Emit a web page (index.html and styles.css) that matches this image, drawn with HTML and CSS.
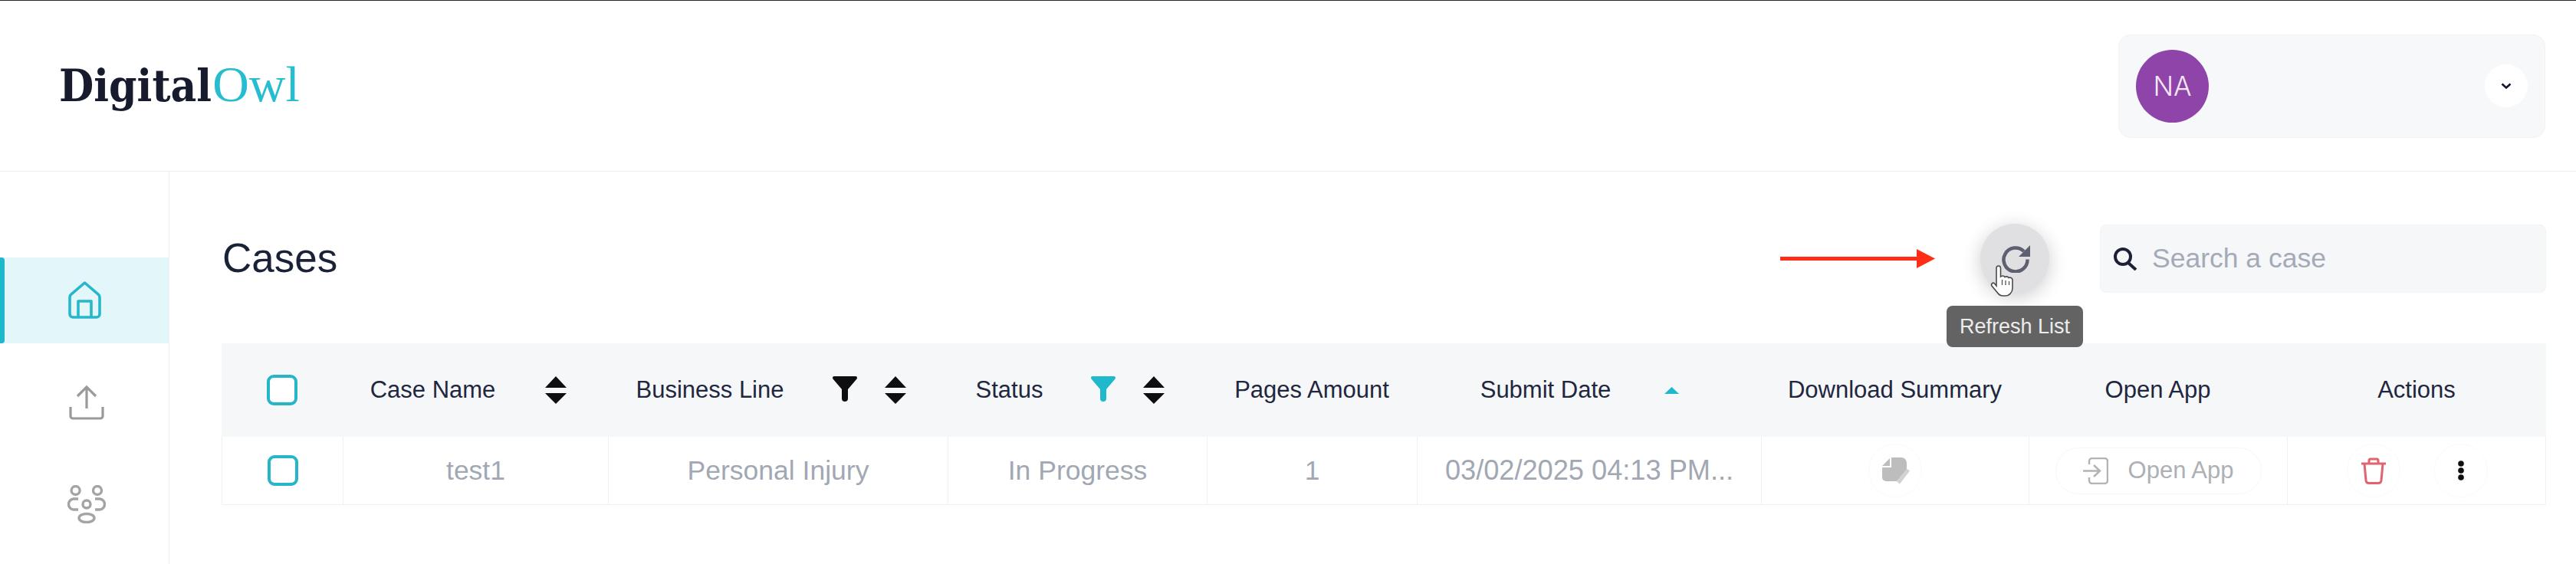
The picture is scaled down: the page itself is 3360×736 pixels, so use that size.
FILE: index.html
```html
<!DOCTYPE html>
<html lang="en">
<head>
<meta charset="utf-8">
<title>Cases</title>
<link rel="stylesheet" href="styles.css">
</head>
<body>
<div class="app">
  <header class="topbar">
    <div class="logo"><span class="logo-dark">Digital</span><span class="logo-light">Owl</span></div>
    <div class="user-card">
      <div class="avatar">NA</div>
      <div class="chevron-btn">
        <svg class="ic-chevron" viewBox="0 0 14 8"><path d="M1.5 1.5 7 6.5l5.5-5"/></svg>
      </div>
    </div>
  </header>
  <div class="main">
    <nav class="sidebar">
      <a class="nav-item nav-active">
        <svg class="ic-home" viewBox="0 0 45 50"><path d="M3 43V21c0-1.5.6-2.800 1.800-3.800L22.500 2l17.700 15.200c1.200 1 1.800 2.300 1.800 3.800v22a4 4 0 0 1-4 4H7a4 4 0 0 1-4-4z"/><path d="M14 47V26h17v21"/></svg>
      </a>
      <a class="nav-item">
        <svg class="ic-upload" viewBox="0 0 46 46"><path d="M23 31V3M11 15 23 3l12 12"/><path d="M2 29v12a3 3 0 0 0 3 3h36a3 3 0 0 0 3-3V29"/></svg>
      </a>
      <a class="nav-item">
        <svg class="ic-group" viewBox="0 0 50 50"><circle cx="10.600" cy="7" r="5.500"/><circle cx="39" cy="7" r="5.500"/><circle cx="25" cy="25" r="5"/><ellipse cx="25" cy="43" rx="10" ry="5.500"/><path d="M14 18H8a6.500 7 0 0 0 0 14h6"/><path d="M36 18h6a6.500 7 0 0 1 0 14h-6"/></svg>
      </a>
    </nav>
    <section class="content">
      <div class="toolbar">
        <h1 class="title">Cases</h1>
        <svg class="ic-arrow" viewBox="0 0 202 25"><path d="M0 10h178V0l24 12.500L178 25V15H0z"/></svg>
        <div class="refresh">
          <svg class="ic-refresh" viewBox="0 0 38 37"><path class="arc" d="M29 9A15.500 15.500 0 1 0 33.500 19.500"/><path class="head" d="M37 1v15H22z"/></svg>
          <svg class="ic-hand" viewBox="0 0 32 42"><path d="M8 4c0-4 5.500-4 5.500 0v11c2.500-1.500 4.500-1 5.500.5 2-1 4-.5 5 1 2-1 4.500 0 5 2.500v11c0 5.500-4 10-9.500 10h-3c-3.500 0-5.500-1.500-7.500-4.500L2 27c-1.500-2.500 1.500-5 3.500-3L8 27z"/><path d="M15.500 19v7M20 20v6M24.500 21v5"/></svg>
          <div class="tooltip">Refresh List</div>
        </div>
        <label class="search">
          <svg class="ic-search" viewBox="0 0 32 30"><circle cx="13" cy="12" r="10"/><path d="m20 20 10 9"/></svg>
          <span class="search-text">Search a case</span>
        </label>
      </div>
      <div class="table">
        <div class="row head-row">
          <div class="cell"><span class="check"></span></div>
          <div class="cell"><span>Case Name</span><svg class="ic-sort gap-wide" viewBox="0 0 28 36"><path d="M14 0l14 15H0zM0 22h28L14 36z"/></svg></div>
          <div class="cell"><span>Business Line</span><svg class="ic-filter" viewBox="0 0 32 33"><path d="M2 0h28c2 0 2.500 2 1.500 3.500L20 17v12a4 4 0 0 1-8 0V17L.5 3.500C-.5 2 0 0 2 0z"/></svg><svg class="ic-sort gap-narrow" viewBox="0 0 28 36"><path d="M14 0l14 15H0zM0 22h28L14 36z"/></svg></div>
          <div class="cell"><span>Status</span><svg class="ic-filter filter-on" viewBox="0 0 32 33"><path d="M2 0h28c2 0 2.500 2 1.500 3.500L20 17v12a4 4 0 0 1-8 0V17L.5 3.500C-.5 2 0 0 2 0z"/></svg><svg class="ic-sort gap-narrow" viewBox="0 0 28 36"><path d="M14 0l14 15H0zM0 22h28L14 36z"/></svg></div>
          <div class="cell"><span>Pages Amount</span></div>
          <div class="cell"><span>Submit Date</span><span class="sort-slot"><svg class="ic-asc" viewBox="0 0 19 9"><path d="M9.500 0 19 9H0z"/></svg></span></div>
          <div class="cell"><span>Download Summary</span></div>
          <div class="cell"><span>Open App</span></div>
          <div class="cell"><span>Actions</span></div>
        </div>
        <div class="row body-row">
          <div class="cell"><span class="check"></span></div>
          <div class="cell">test1</div>
          <div class="cell">Personal Injury</div>
          <div class="cell">In Progress</div>
          <div class="cell">1</div>
          <div class="cell"><span class="clip">03/02/2025 04:13 PM...</span></div>
          <div class="cell">
            <span class="round-btn">
              <svg class="ic-doc" viewBox="0 0 37 36"><path class="doc" d="M12 1h14a7 7 0 0 1 7 7v9L20 32H6a5 5 0 0 1-5-5V12z"/><path class="fold" d="M1 13h11V1"/><path class="pen" d="m35 17-13 17"/></svg>
            </span>
          </div>
          <div class="cell">
            <span class="open-btn">
              <svg class="ic-open" viewBox="0 0 33 35"><path d="M8 9V5a4 4 0 0 1 4-4h16a4 4 0 0 1 4 4v25a4 4 0 0 1-4 4H12a4 4 0 0 1-4-4v-4"/><path d="M0 17.500h21M14 10l8 7.500-8 7.500"/></svg>
              <span>Open App</span>
            </span>
          </div>
          <div class="cell actions">
            <span class="round-btn">
              <svg class="ic-trash" viewBox="0 0 34 35"><path d="M1 8h32M11 8V4a2 2 0 0 1 2-2h8a2 2 0 0 1 2 2v4"/><path d="m5 8 2 22a4 4 0 0 0 4 3.500h12a4 4 0 0 0 4-3.500l2-22"/></svg>
            </span>
            <span class="round-btn">
              <svg class="ic-dots" viewBox="0 0 12 26"><circle cx="6" cy="4" r="3.800"/><circle cx="6" cy="13" r="3.800"/><circle cx="6" cy="22" r="3.800"/></svg>
            </span>
          </div>
        </div>
      </div>
    </section>
  </div>
</div>
</body>
</html>
```
FILE: styles.css
```css
* { box-sizing: border-box; }
html, body { margin: 0; padding: 0; background: #fff; }
body { font-family: "Liberation Sans", Arial, sans-serif; color: #1b2238; }
svg { display: block; flex: none; }

.app { width: 3360px; height: 736px; overflow: hidden; border-top: 1px solid #2a2a2a; display: flex; flex-direction: column; }

/* Top bar */
.topbar { height: 223px; flex: none; border-bottom: 1px solid #eceef0; display: flex; align-items: center; justify-content: space-between; padding: 0 40px 0 77px; }
.logo { display: flex; align-items: baseline; line-height: 1; margin-top: -4px; }
.logo-dark { font-family: "DejaVu Serif Condensed", "DejaVu Serif", serif; font-weight: 700; font-size: 58px; color: #181b2e; }
.logo-light { font-family: "Liberation Serif", serif; font-size: 66px; color: #26bdd0; margin-left: 1px; }
.user-card { width: 557px; height: 135px; background: #f7f8fa; border: 1px solid #f1f2f4; border-radius: 16px; display: flex; align-items: center; justify-content: space-between; padding: 0 22px 0 22px; }
.avatar { width: 95px; height: 95px; border-radius: 50%; background: #8e44a8; color: #f5e9f7; font-family: Inter, sans-serif; font-size: 35px; font-weight: 300; display: flex; align-items: center; justify-content: center; }
.chevron-btn { width: 56px; height: 56px; border-radius: 50%; background: #fff; display: flex; align-items: center; justify-content: center; }
.ic-chevron { width: 14px; height: 8px; fill: none; stroke: #15182a; stroke-width: 2.6; }

/* Layout */
.main { flex: 1; display: flex; min-height: 0; }
.sidebar { width: 221px; flex: none; border-right: 1px solid #eceef0; padding-top: 112px; display: flex; flex-direction: column; gap: 21px; }
.nav-item { height: 112px; flex: none; display: flex; align-items: center; justify-content: center; padding-left: 6px; position: relative; }
.nav-active { background: #e3f6fa; padding-left: 0; }
.nav-active::before { content: ""; position: absolute; left: 0; top: 0; bottom: 0; width: 6px; background: #1cb8cc; border-radius: 0 4px 4px 0; }
.ic-home { width: 45px; height: 50px; fill: none; stroke: #27b7ca; stroke-width: 3.6; stroke-linejoin: round; }
.ic-upload { width: 46px; height: 46px; fill: none; stroke: #9a9a9a; stroke-width: 3.2; }
.ic-group { width: 50px; height: 50px; fill: none; stroke: #a4a4a4; stroke-width: 3.4; }

.content { flex: 1; padding: 68px 39px 0 68px; min-width: 0; }

/* Toolbar */
.toolbar { height: 91px; display: flex; align-items: center; margin-bottom: 65px; }
.title { margin: -3px auto 0 1px; font-size: 53px; font-weight: 400; color: #1b2238; }
.ic-arrow { width: 202px; height: 25px; fill: #ff2d16; margin-right: 59px; }
.refresh { width: 90px; height: 91px; border-radius: 50%; background: #e0e0e2; box-shadow: 0 5px 24px rgba(0,0,0,.2); position: relative; display: flex; align-items: center; justify-content: center; margin-right: 66px; }
.ic-refresh { width: 38px; height: 37px; margin-left: 4px; margin-top: -1px; }
.ic-refresh .arc { fill: none; stroke: #5e5f70; stroke-width: 4.5; }
.ic-refresh .head { fill: #5e5f70; }
.ic-hand { position: absolute; left: 13px; top: 54px; width: 32px; height: 42px; fill: #fff; stroke: #4a4a4a; stroke-width: 1.6; }
.ic-hand path + path { fill: none; stroke-width: 1.2; }
.tooltip { position: absolute; left: -44px; top: 107px; width: 178px; height: 54px; border-radius: 8px; background: #636363; color: #ececec; font-size: 27px; display: flex; align-items: center; justify-content: center; white-space: nowrap; z-index: 2; }
.search { width: 582px; height: 89px; background: #f6f7f9; border: 1px solid #f2f3f5; border-radius: 8px; display: flex; align-items: center; padding-left: 16px; gap: 19px; }
.ic-search { width: 32px; height: 30px; fill: none; stroke: #1b2238; stroke-width: 4; }
.search-text { font-size: 35.5px; color: #a3aab8; }

/* Table */
.table { width: 3032px; }
.row { display: grid; grid-template-columns: 158px 346px 443px 338px 274px 449px 349px 337px 338px; }
.cell { display: flex; align-items: center; justify-content: center; min-width: 0; }
.head-row { height: 122px; background: #f6f7f9; font-size: 31px; color: #1f2740; }
.body-row { height: 89px; font-size: 35.5px; color: #a1a8b3; border: 1px solid #eef0f2; border-top: 0; }
.body-row .cell { border-right: 1px solid #eef0f2; }
.body-row .cell:last-child { border-right: 0; }
.check { width: 40px; height: 40px; border: 4px solid #26b6c9; border-radius: 9px; background: #fff; }

.ic-sort { width: 28px; height: 36px; fill: #0e0e10; margin-right: 18px; }
.gap-wide { margin-left: 65px; }
.gap-narrow { margin-left: 36px; }
.ic-filter { width: 32px; height: 33px; fill: #0e0e10; margin-left: 63px; margin-top: -3px; }
.filter-on { fill: #1fb8cc; }
.sort-slot { width: 28px; margin-left: 65px; margin-right: 20px; display: flex; justify-content: center; }
.ic-asc { width: 19px; height: 9px; fill: #1fb8cc; }

.clip { white-space: nowrap; overflow: hidden; font-size: 36.2px; }
.round-btn { width: 70px; height: 70px; border-radius: 50%; border: 1px solid #fafafa; display: flex; align-items: center; justify-content: center; }
.actions { gap: 44px; }
.ic-doc { width: 37px; height: 36px; }
.ic-doc .doc { fill: #bdbdbd; }
.ic-doc .fold { fill: none; stroke: #fff; stroke-width: 2; }
.ic-doc .pen { fill: none; stroke: #d2d2d2; stroke-width: 5; }
.open-btn { width: 269px; height: 61px; border: 1px solid #f7f7f7; border-radius: 30px; display: flex; align-items: center; justify-content: center; gap: 26px; font-size: 31px; color: #adb0b5; }
.ic-open { width: 33px; height: 35px; fill: none; stroke: #b4b4b4; stroke-width: 2.5; }
.ic-trash { width: 34px; height: 35px; fill: none; stroke: #e0636f; stroke-width: 3; }
.ic-dots { width: 12px; height: 26px; fill: #0e0e10; }
```
